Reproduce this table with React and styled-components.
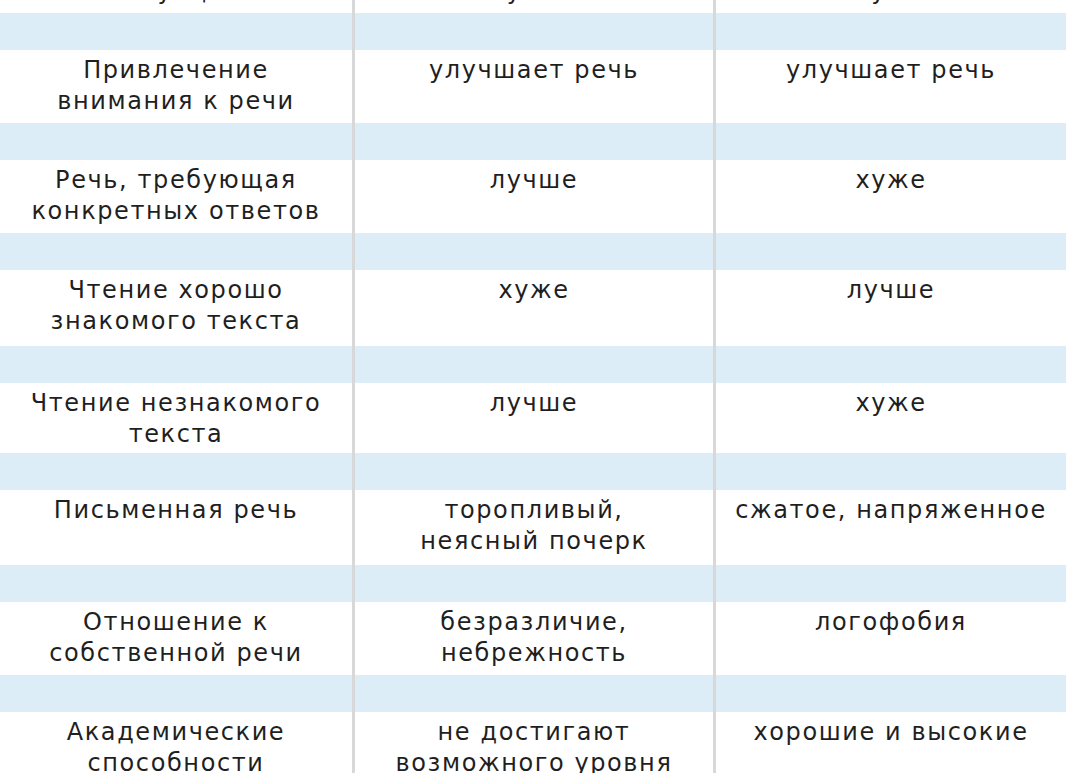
import React from 'react';
import styled, { createGlobalStyle } from 'styled-components';

const GlobalStyle = createGlobalStyle`
  html, body {
    margin: 0;
    padding: 0;
    background: #ffffff;
    overflow: hidden;
  }
  body {
    font-family: 'DejaVu Sans', 'Noto Sans', sans-serif;
    color: #1f1f1f;
  }
`;

// the table is scrolled: the first row is only partly visible
const Table = styled.div`
  width: 1066px;
  margin-top: -60px;
`;

const Row = styled.div`
  display: grid;
  grid-template-columns: 352px 361px 1fr;
  height: ${props => (props.spacer ? '37px' : `${props.h || 73}px`)};
  background: ${props => (props.spacer ? '#dcedf7' : '#ffffff')};
`;

const Cell = styled.div`
  box-sizing: border-box;
  padding: 5px 2px 0;
  border-left: ${props => (props.first ? 'none' : '3px solid #d8d8d8')};
  text-align: center;
  font-size: 24px;
  line-height: 31px;
  letter-spacing: 1.6px;
  white-space: pre-line;
`;

const rows = [
  ['Речь в стрессовой\nситуации', '\nлучше', '\nхуже', 73],
  ['Привлечение\nвнимания к речи', 'улучшает речь', 'улучшает речь', 73],
  ['Речь, требующая\nконкретных ответов', 'лучше', 'хуже', 73],
  ['Чтение хорошо\nзнакомого текста', 'хуже', 'лучше', 76],
  ['Чтение незнакомого\nтекста', 'лучше', 'хуже', 70],
  ['Письменная речь', 'торопливый,\nнеясный почерк', 'сжатое, напряженное', 75],
  ['Отношение к\nсобственной речи', 'безразличие,\nнебрежность', 'логофобия', 73],
  ['Академические\nспособности', 'не достигают\nвозможного уровня', 'хорошие и высокие', 73],
];

const App = () => (
  <>
    <GlobalStyle />
    <Table>
      {rows.map(([a, b, c, h], i) => (
        <React.Fragment key={i}>
          {i > 0 && (
            <Row spacer>
              <Cell first />
              <Cell />
              <Cell />
            </Row>
          )}
          <Row h={h}>
            <Cell first>{a}</Cell>
            <Cell>{b}</Cell>
            <Cell>{c}</Cell>
          </Row>
        </React.Fragment>
      ))}
    </Table>
  </>
);

export default App;
